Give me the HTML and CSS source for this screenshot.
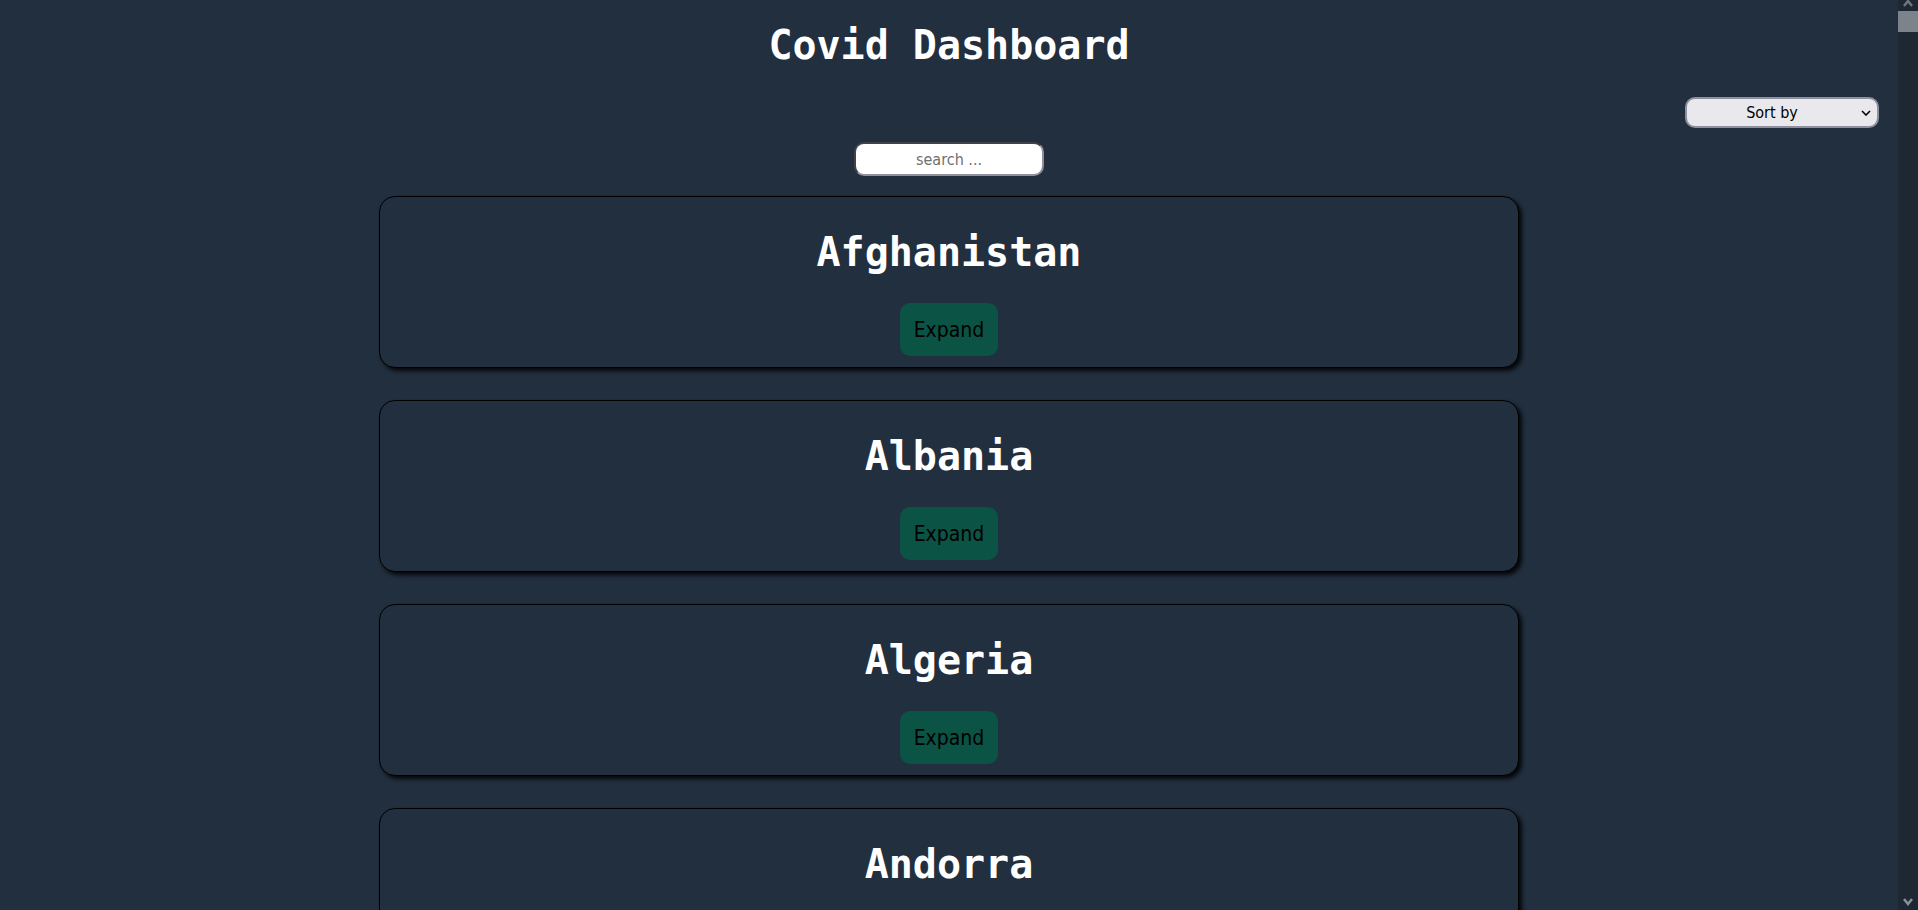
FILE: index.html
```html
<!DOCTYPE html>
<html lang="en">
<head>
<meta charset="utf-8">
<title>Covid Dashboard</title>
<link rel="stylesheet" href="styles.css">
</head>
<body>
<div class="page">
  <header class="top">
    <h1 class="title">Covid Dashboard</h1>
    <div class="sort-row">
      <span class="select-wrap">
        <select class="sort">
          <option>Sort by</option>
          <option>Cases</option>
          <option>Deaths</option>
          <option>Recovered</option>
        </select>
        <svg class="chev" width="10" height="6" viewBox="0 0 10 6"><path d="M1 1 L5 5 L9 1" fill="none" stroke="#000" stroke-width="1.6"/></svg>
      </span>
    </div>
    <div class="search-row">
      <input class="search" type="text" placeholder="search ...">
    </div>
  </header>
  <main class="list">
    <div class="card"><h2 class="name">Afghanistan</h2><button class="expand">Expand</button></div>
    <div class="card"><h2 class="name">Albania</h2><button class="expand">Expand</button></div>
    <div class="card"><h2 class="name">Algeria</h2><button class="expand">Expand</button></div>
    <div class="card"><h2 class="name">Andorra</h2><button class="expand">Expand</button></div>
    <div class="card"><h2 class="name">Angola</h2><button class="expand">Expand</button></div>
    <div class="card"><h2 class="name">Antigua and Barbuda</h2><button class="expand">Expand</button></div>
    <div class="card"><h2 class="name">Argentina</h2><button class="expand">Expand</button></div>
    <div class="card"><h2 class="name">Armenia</h2><button class="expand">Expand</button></div>
    <div class="card"><h2 class="name">Australia</h2><button class="expand">Expand</button></div>
    <div class="card"><h2 class="name">Austria</h2><button class="expand">Expand</button></div>
    <div class="card"><h2 class="name">Azerbaijan</h2><button class="expand">Expand</button></div>
    <div class="card"><h2 class="name">Bahamas</h2><button class="expand">Expand</button></div>
    <div class="card"><h2 class="name">Bahrain</h2><button class="expand">Expand</button></div>
    <div class="card"><h2 class="name">Bangladesh</h2><button class="expand">Expand</button></div>
    <div class="card"><h2 class="name">Barbados</h2><button class="expand">Expand</button></div>
    <div class="card"><h2 class="name">Belarus</h2><button class="expand">Expand</button></div>
    <div class="card"><h2 class="name">Belgium</h2><button class="expand">Expand</button></div>
    <div class="card"><h2 class="name">Belize</h2><button class="expand">Expand</button></div>
    <div class="card"><h2 class="name">Benin</h2><button class="expand">Expand</button></div>
    <div class="card"><h2 class="name">Bhutan</h2><button class="expand">Expand</button></div>
  </main>
</div>
<div class="scrollbar" aria-hidden="true">
  <svg class="sb-arrow sb-up" width="20" height="10" viewBox="0 0 20 10"><path d="M6 8 L10 3 L14 8" fill="none" stroke="#6f757d" stroke-width="2.5"/></svg>
  <div class="sb-thumb"></div>
  <div class="sb-track"></div>
  <svg class="sb-arrow sb-down" width="20" height="12" viewBox="0 0 20 12"><path d="M6 3 L10 8 L14 3" fill="none" stroke="#8a9098" stroke-width="2.5"/></svg>
</div>
</body>
</html>
```
FILE: styles.css
```css
html {
  background: #222f3e;
}
body {
  margin: 0;
  background: #222f3e;
  color: #fff;
  font-family: "DejaVu Sans Condensed", "DejaVu Sans", sans-serif;
}
.page {
  margin-right: 20px;
}
.top {
  display: flex;
  flex-direction: column;
}
.title {
  margin: 21px 0 0;
  font-family: "DejaVu Sans Mono", monospace;
  font-weight: bold;
  font-size: 40px;
  line-height: 48px;
  text-align: center;
  color: #fff;
}
.sort-row {
  display: flex;
  justify-content: flex-end;
  margin-top: 28px;
  padding-right: 19px;
}
.select-wrap {
  position: relative;
  display: block;
  width: 194px;
  height: 31px;
}
.sort {
  -webkit-appearance: none;
  appearance: none;
  box-sizing: border-box;
  width: 100%;
  height: 100%;
  margin: 0;
  padding: 0 20px 0 0;
  border: 2px solid #8f8f9d;
  border-radius: 10px;
  background: #e9e9ed;
  color: #000;
  font-family: "DejaVu Sans Condensed", "DejaVu Sans", sans-serif;
  font-size: 16px;
  text-align: center;
  text-align-last: center;
}
.chev {
  position: absolute;
  right: 8px;
  top: 13px;
  pointer-events: none;
}
.search-row {
  display: flex;
  justify-content: center;
  margin-top: 14px;
}
.search {
  box-sizing: border-box;
  width: 190px;
  height: 34px;
  margin: 0;
  padding: 0 8px;
  border: 2px inset #8f8f9d;
  border-radius: 10px;
  background: #fff;
  color: #000;
  font-family: "DejaVu Sans Condensed", "DejaVu Sans", sans-serif;
  font-size: 16px;
  text-align: center;
}
.search::placeholder {
  color: #707070;
}
.list {
  display: flex;
  flex-direction: column;
  align-items: center;
  gap: 32px;
  padding: 20px 0 40px;
}
.card {
  width: 60%;
  display: flex;
  flex-direction: column;
  align-items: center;
  padding: 31px 0 11px;
  border: 1px solid #000;
  border-radius: 16px;
  box-shadow: 3px 3px 4px rgba(0, 0, 0, 0.85);
  background: #222f3e;
}
.name {
  margin: 0 0 27px;
  font-family: "DejaVu Sans Mono", monospace;
  font-weight: bold;
  font-size: 40px;
  line-height: 48px;
  color: #fff;
}
.expand {
  height: 53px;
  padding: 0 14px;
  border: none;
  border-radius: 10px;
  background: #0b5345;
  color: #000;
  font-family: "DejaVu Sans Condensed", "DejaVu Sans", sans-serif;
  font-size: 21px;
  cursor: pointer;
}
.scrollbar {
  position: fixed;
  top: 0;
  right: 0;
  bottom: 0;
  width: 20px;
  display: flex;
  flex-direction: column;
  background: #1d2833;
}
.sb-arrow {
  display: block;
  flex: none;
}
.sb-up {
  height: 10px;
  margin-top: -2px;
  margin-bottom: 3px;
}
.sb-thumb {
  flex: none;
  height: 21px;
  background: #7d838b;
}
.sb-track {
  flex: 1;
}
.sb-down {
  height: 12px;
  margin-bottom: 2px;
}
```
